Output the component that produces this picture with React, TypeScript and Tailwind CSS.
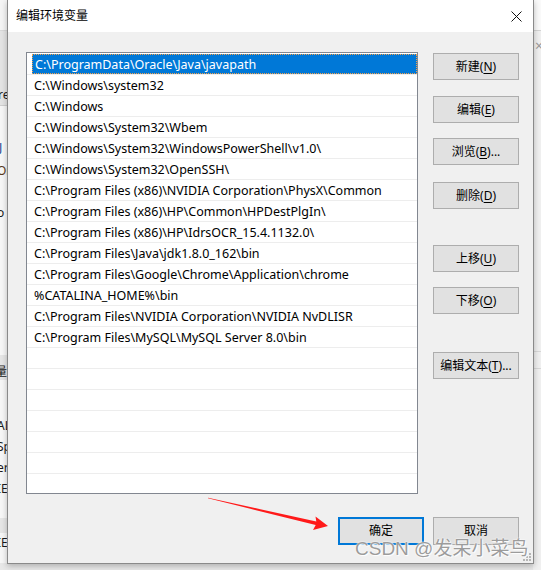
import React from 'react';

const paths = [
  'C:\\ProgramData\\Oracle\\Java\\javapath',
  'C:\\Windows\\system32',
  'C:\\Windows',
  'C:\\Windows\\System32\\Wbem',
  'C:\\Windows\\System32\\WindowsPowerShell\\v1.0\\',
  'C:\\Windows\\System32\\OpenSSH\\',
  'C:\\Program Files (x86)\\NVIDIA Corporation\\PhysX\\Common',
  'C:\\Program Files (x86)\\HP\\Common\\HPDestPlgIn\\',
  'C:\\Program Files (x86)\\HP\\IdrsOCR_15.4.1132.0\\',
  'C:\\Program Files\\Java\\jdk1.8.0_162\\bin',
  'C:\\Program Files\\Google\\Chrome\\Application\\chrome',
  '%CATALINA_HOME%\\bin',
  'C:\\Program Files\\NVIDIA Corporation\\NVIDIA NvDLISR',
  'C:\\Program Files\\MySQL\\MySQL Server 8.0\\bin',
];

// 21 visible rows in the list, the rest are blank
const rows = [...paths, ...Array(21 - paths.length).fill('')];

function Btn({ label, acc, dots, className = '' }: { label: string; acc?: string; dots?: boolean; className?: string }) {
  return (
    <button
      className={`flex h-[27px] w-[86px] items-center justify-center border border-[#adadad] bg-[#e1e1e1] text-[12px] text-black ${className}`}
    >
      {label}
      {acc && (
        <>
          (<span className="underline underline-offset-2">{acc}</span>)
        </>
      )}
      {dots && '...'}
    </button>
  );
}

// slice of the window behind the dialog, only a few px of it show
function LeftStrip() {
  return (
    <div className="absolute left-0 top-0 flex h-[570px] w-[7px] flex-col overflow-hidden text-[12px] leading-none text-[#1a1a1a]">
      <div className="h-[31px] shrink-0 border-b border-[#d9d9d9] bg-[#f5f5f5]" />
      <div className="flex h-[74px] shrink-0 flex-col justify-end bg-[#e4e4e4] pb-[4px]">
        <span className="-ml-[2px] whitespace-nowrap">re</span>
      </div>
      <div className="flex h-[250px] shrink-0 flex-col border-t border-[#cfcfcf] bg-[#f7f7f7]">
        <span className="-ml-[4px] mt-[36px] whitespace-nowrap text-[#1f3f8f]">iJ</span>
        <span className="-ml-[3px] mt-[11px] whitespace-nowrap text-[#5a3a1a]">Or</span>
        <span className="-ml-[3px] mt-[30px] whitespace-nowrap">o</span>
      </div>
      <div className="flex h-[25px] shrink-0 items-center bg-[#e6e6e6]">
        <span className="-ml-[5px] mt-[8px] whitespace-nowrap">量</span>
      </div>
      <div className="flex h-[138px] shrink-0 flex-col bg-[#f7f7f7]">
        <span className="-ml-[3px] mt-[40px] whitespace-nowrap">AL</span>
        <span className="-ml-[3px] mt-[9px] whitespace-nowrap">Sp</span>
        <span className="-ml-[3px] mt-[9px] whitespace-nowrap">er</span>
        <span className="-ml-[3px] mt-[9px] whitespace-nowrap">IE</span>
      </div>
      <div className="h-[15px] shrink-0 bg-[#e6e6e6]" />
      <div className="flex h-[30px] shrink-0 flex-col bg-[#f7f7f7]">
        <span className="-ml-[3px] mt-[4px] whitespace-nowrap">IE</span>
      </div>
    </div>
  );
}

function RightStrip() {
  return (
    <div className="absolute right-0 top-0 flex h-[570px] w-[8px] flex-col overflow-hidden bg-[#f0f0f0]">
      <div className="h-[31px] shrink-0 border-b border-[#d4d4d4] bg-[#fafafa]" />
      <div className="h-[320px] shrink-0 pl-[2px] pt-[8px] text-[14px] leading-none text-[#9a9a9a]">×</div>
      <div className="h-[18px] shrink-0 border-y border-[#d8d8d8]" />
    </div>
  );
}

export default function App() {
  return (
    <div className="relative h-[570px] w-[541px] overflow-hidden bg-[#e8e8e8] font-['Noto_Sans','Noto_Sans_CJK_SC',sans-serif]">
      <LeftStrip />
      <RightStrip />

      {/* dialog */}
      <div className="absolute left-[7px] top-0 flex h-[564px] w-[527px] flex-col border-x border-b border-[#8a8a8a] bg-[#f0f0f0] shadow-[0_2px_6px_rgba(0,0,0,0.25)]">
        <div className="flex h-[32px] shrink-0 items-center justify-between bg-white pl-[8px] pr-[10px]">
          <span className="text-[12px] text-black">编辑环境变量</span>
          <svg width="11" height="11" viewBox="0 0 11 11" className="mr-[1px]">
            <path d="M0.5 0.5L10.5 10.5M10.5 0.5L0.5 10.5" stroke="#111" strokeWidth="1" />
          </svg>
        </div>

        <div className="flex flex-1 flex-col pl-[18px] pr-[14px] pt-[20px]">
          <div className="flex">
            <div className="h-[442px] w-[392px] overflow-hidden border border-[#828790] bg-white pt-[1px]">
              {rows.map((p, i) => (
                <div key={i} className="flex h-[21px] border-b border-[#ededed]">
                  <div
                    className={`ml-[5px] flex flex-1 items-center whitespace-nowrap pl-[2px] pt-[2px] text-[12.5px] ${
                      i === 0 ? 'border border-dotted border-[#f3a04a] bg-[#0078d7] text-white' : 'text-black'
                    }`}
                  >
                    {p}
                  </div>
                </div>
              ))}
            </div>

            <div className="ml-[15px] flex flex-col">
              <Btn label="新建" acc="N" className="mt-[1px]" />
              <Btn label="编辑" acc="E" className="mt-[16px]" />
              <Btn label="浏览" acc="B" dots className="mt-[15px]" />
              <Btn label="删除" acc="D" className="mt-[17px]" />
              <Btn label="上移" acc="U" className="mt-[36px]" />
              <Btn label="下移" acc="O" className="mt-[15px]" />
              <Btn label="编辑文本" acc="T" dots className="mt-[38px]" />
            </div>
          </div>

          <div className="mt-[23px] flex justify-end gap-[9px]">
            <button className="flex h-[28px] w-[86px] items-center justify-center border-2 border-[#0078d7] bg-[#e1e1e1] text-[12px] text-black">
              确定
            </button>
            <Btn label="取消" className="h-[28px]" />
          </div>
        </div>

        {/* size grip */}
        <div className="absolute bottom-[2px] right-[2px] grid grid-cols-3 gap-[1px]">
          {[0, 1, 2, 3, 4, 5, 6, 7, 8].map((k) => (
            <div key={k} className={`h-[2px] w-[2px] ${k === 0 || k === 1 || k === 3 ? 'bg-transparent' : 'bg-[#b5b5b5]'}`} />
          ))}
        </div>
      </div>

      {/* red annotation arrow */}
      <svg className="pointer-events-none absolute left-0 top-0" width="541" height="570" viewBox="0 0 541 570">
        <path d="M208 497.8 L316.3 521.5 L315.5 516.5 L328 526 L313 530 L315.7 524.9 L208 498.3 Z" fill="#ff1a1a" />
      </svg>

      {/* watermark */}
      <div className="pointer-events-none absolute left-[355px] top-[539px] whitespace-nowrap font-['Liberation_Sans','Noto_Sans_CJK_SC',sans-serif] text-[19px] leading-none text-[#9c9c9c] [text-shadow:0_0_1px_#fff,0_0_2px_#fff,1px_1px_1px_#fff]">
        CSDN @发呆小菜鸟
      </div>
    </div>
  );
}
